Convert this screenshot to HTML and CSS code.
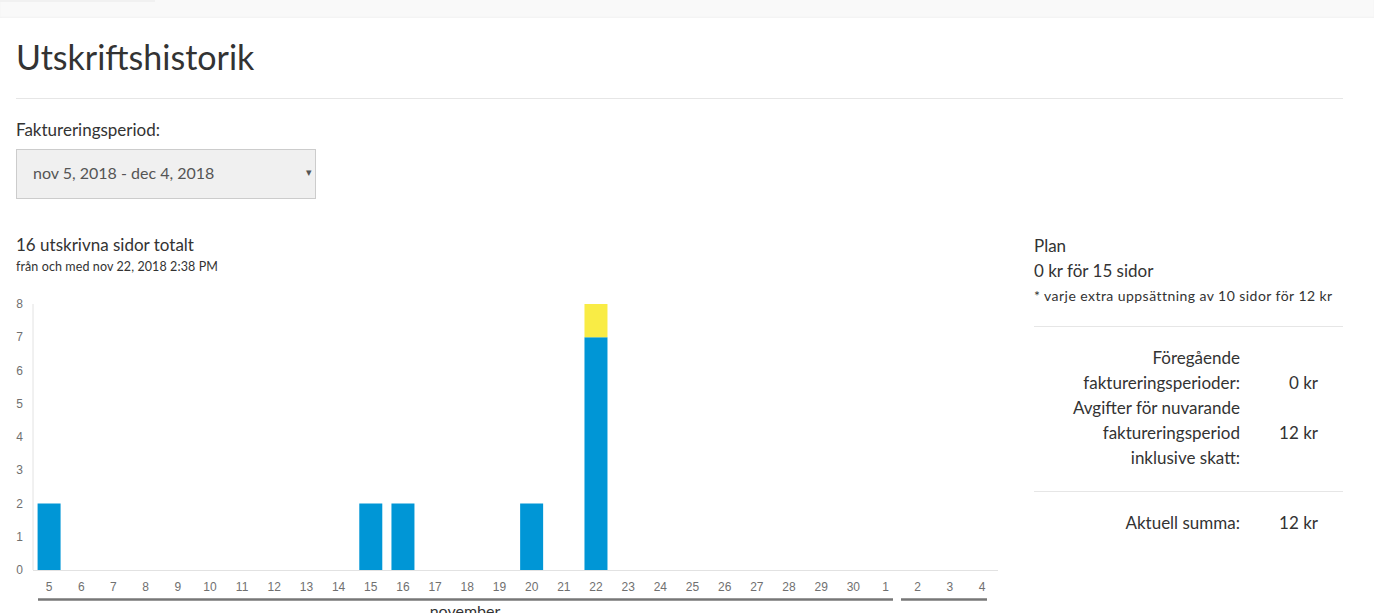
FILE: index.html
```html
<!DOCTYPE html>
<html lang="sv">
<head>
    <meta charset="UTF-8">
    <meta name="viewport" content="width=device-width, initial-scale=1.0">
    <title>Utskriftshistorik</title>
    <link rel="stylesheet" href="styles.css">
</head>
<body>
    <div class="topbar"><span class="topbar-tab"></span></div>

    <main class="page">
        <header class="page-header">
            <h1>Utskriftshistorik</h1>
        </header>

        <label class="field-label" for="period">Faktureringsperiod:</label>
        <div class="select-wrap">
            <select id="period" class="period-select">
                <option>nov 5, 2018 - dec 4, 2018</option>
                <option>okt 5, 2018 - nov 4, 2018</option>
            </select>
            <span class="select-arrow">&#9662;</span>
        </div>

        <div class="usage">
            <section class="usage-chart">
                <h2 class="usage-total">16 utskrivna sidor totalt</h2>
                <p class="usage-since">från och med nov 22, 2018 2:38 PM</p>
                <svg id="chart" class="chart" width="990" height="330"></svg>
            </section>

            <aside class="plan">
                <div class="plan-name">Plan</div>
                <div class="plan-price">0 kr för 15 sidor</div>
                <div class="plan-note">* varje extra uppsättning av 10 sidor för 12 kr</div>

                <div class="charges">
                    <div class="charge-row">
                        <span class="charge-label">Föregående<br>faktureringsperioder:</span>
                        <span class="charge-value charge-value-end">0 kr</span>
                    </div>
                    <div class="charge-row">
                        <span class="charge-label">Avgifter för nuvarande<br>faktureringsperiod<br>inklusive skatt:</span>
                        <span class="charge-value">12 kr</span>
                    </div>
                </div>

                <div class="charges charges-total">
                    <div class="charge-row">
                        <span class="charge-label">Aktuell summa:</span>
                        <span class="charge-value">12 kr</span>
                    </div>
                </div>
            </aside>
        </div>
    </main>

    <script>
        // pages per day for the billing period, [regular, extra]
        var days = [];
        for (var d = 5; d <= 30; d++) days.push({ day: d, month: 'nov' });
        for (var d = 1; d <= 4; d++) days.push({ day: d, month: 'dec' });

        var usage = { 5: [2, 0], 15: [2, 0], 16: [2, 0], 20: [2, 0], 22: [7, 1] };

        var svg = document.getElementById('chart');
        var NS = 'http://www.w3.org/2000/svg';
        var left = 17, base = 275, unit = 33.25, slot = 32.17, barW = 23;

        function el(name, attrs, text) {
            var node = document.createElementNS(NS, name);
            for (var k in attrs) node.setAttribute(k, attrs[k]);
            if (text !== undefined) node.textContent = text;
            svg.appendChild(node);
            return node;
        }

        // y axis labels
        for (var v = 0; v <= 8; v++) {
            el('text', { x: 7, y: base - v * unit + 4, 'text-anchor': 'end', 'class': 'tick' }, v);
        }

        days.forEach(function (item, i) {
            var cx = left + slot * (i + 0.5);
            var counts = item.month === 'nov' ? usage[item.day] : null;
            if (counts) {
                var h1 = counts[0] * unit, h2 = counts[1] * unit;
                el('rect', { x: cx - barW / 2, y: base - h1, width: barW, height: h1, 'class': 'bar' });
                if (h2) el('rect', { x: cx - barW / 2, y: base - h1 - h2, width: barW, height: h2, 'class': 'bar-extra' });
            }
            el('text', { x: cx, y: 296, 'text-anchor': 'middle', 'class': 'tick' }, item.day);
        });

        // axes
        el('line', { x1: left, y1: 9, x2: left, y2: base, 'class': 'axis' });
        el('line', { x1: left, y1: base + 0.5, x2: 982, y2: base + 0.5, 'class': 'axis' });

        // month brackets
        el('line', { x1: 22, y1: 304.5, x2: 877, y2: 304.5, 'class': 'month-line' });
        el('line', { x1: 885, y1: 304.5, x2: 971, y2: 304.5, 'class': 'month-line' });
        el('text', { x: 449, y: 322, 'text-anchor': 'middle', 'class': 'month' }, 'november');
        el('text', { x: 928, y: 340, 'text-anchor': 'middle', 'class': 'month' }, 'december');
    </script>
</body>
</html>
```

FILE: styles.css
```css
body {
    margin: 0;
    font-family: "Lato", "Noto Sans", sans-serif;
    color: #333;
    background-color: #fff;
}

.topbar {
    height: 18px;
    background-color: #f9f9f9;
    box-shadow: inset 0 -1px 2px rgba(0, 0, 0, 0.03);
    position: relative;
}

.topbar-tab {
    position: absolute;
    left: 0;
    top: 0;
    width: 155px;
    height: 2px;
    background-color: #f1f1f1;
}

.page {
    padding: 0 31px 0 16px;
}

.page-header {
    border-bottom: 1px solid #e6e6e6;
    padding: 19px 0 21px;
}

h1 {
    margin: 0;
    font-size: 34px;
    font-weight: 400;
    line-height: 40px;
    color: #333;
}

.field-label {
    display: block;
    margin-top: 19px;
    font-size: 17px;
    line-height: 24px;
}

.select-wrap {
    position: relative;
    width: 300px;
    margin-top: 7px;
}

.period-select {
    appearance: none;
    -webkit-appearance: none;
    width: 300px;
    height: 50px;
    padding: 0 30px 3px 16px;
    border: 1px solid #ccc;
    border-radius: 0;
    background-color: #f0f0f0;
    font-family: inherit;
    font-size: 16px;
    color: #555;
}

.select-arrow {
    position: absolute;
    right: 4px;
    top: 16px;
    font-size: 11px;
    color: #555;
    pointer-events: none;
}

.usage {
    display: flex;
    margin-top: 34px;
}

.usage-chart {
    width: 1018px;
}

.usage-total {
    margin: 0;
    font-size: 17px;
    font-weight: 400;
    line-height: 24px;
}

.usage-since {
    margin: 0;
    font-size: 12.5px;
    letter-spacing: 0.1px;
    line-height: 20px;
}

.chart {
    display: block;
    margin-top: 18px;
    overflow: visible;
}

.chart .tick {
    font-family: "Liberation Sans", Arial, sans-serif;
    font-size: 12px;
    fill: #707070;
}

.chart .month {
    font-size: 16px;
    fill: #333;
}

.chart .axis {
    stroke: #e2e2e2;
    stroke-width: 1;
}

.chart .month-line {
    stroke: #777;
    stroke-width: 2.5;
}

.chart .bar {
    fill: #0096d6;
}

.chart .bar-extra {
    fill: #f9ec45;
}

.plan {
    width: 309px;
    font-size: 17px;
    line-height: 25px;
}

.plan-note {
    font-size: 14px;
    letter-spacing: 0.45px;
    line-height: 25px;
    padding-bottom: 18px;
    border-bottom: 1px solid #e6e6e6;
}

.charges {
    padding: 18px 0 21px;
    border-bottom: 1px solid #e6e6e6;
}

.charges-total {
    border-bottom: none;
}

.charge-row {
    display: flex;
    align-items: center;
}

.charge-label {
    width: 206px;
    text-align: right;
}

.charge-value {
    width: 78px;
    text-align: right;
}

.charge-value-end {
    align-self: flex-end;
}
```
